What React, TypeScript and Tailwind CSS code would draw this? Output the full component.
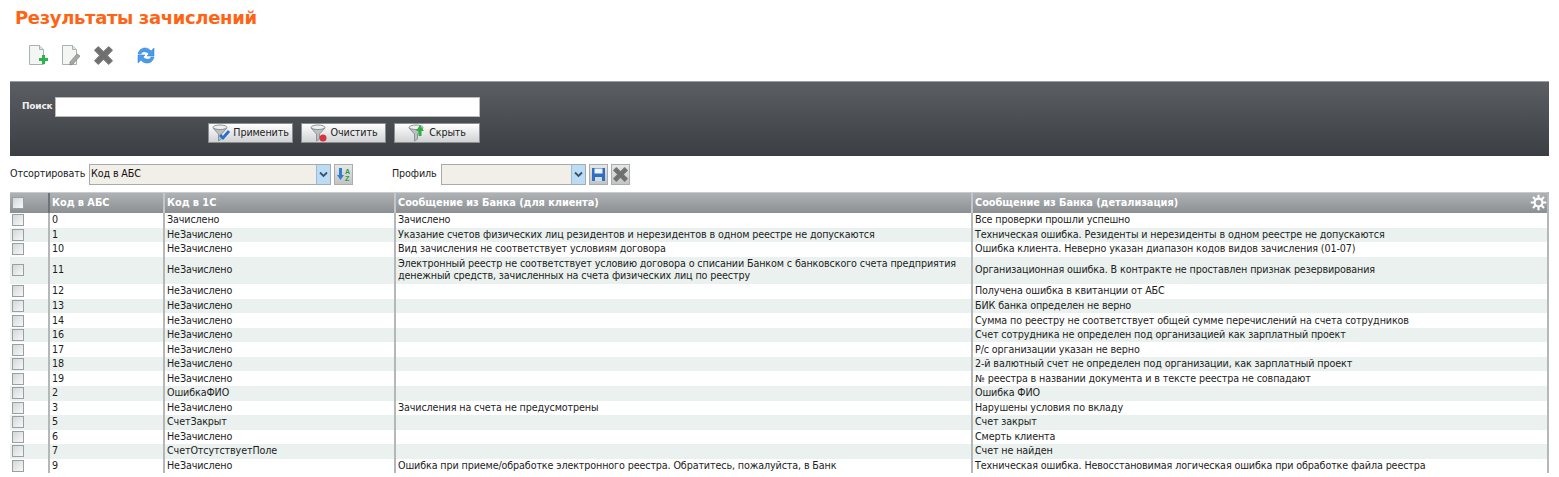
const ROWS = [
  ['0', 'Зачислено', 'Зачислено', 'Все проверки прошли успешно'],
  ['1', 'НеЗачислено', 'Указание счетов физических лиц резидентов и нерезидентов в одном реестре не допускаются', 'Техническая ошибка. Резиденты и нерезиденты в одном реестре не допускаются'],
  ['10', 'НеЗачислено', 'Вид зачисления не соответствует условиям договора', 'Ошибка клиента. Неверно указан диапазон кодов видов зачисления (01-07)'],
  ['11', 'НеЗачислено', 'Электронный реестр не соответствует условию договора о списании Банком с банковского счета предприятия денежный средств, зачисленных на счета физических лиц по реестру', 'Организационная ошибка. В контракте не проставлен признак резервирования'],
  ['12', 'НеЗачислено', '', 'Получена ошибка в квитанции от АБС'],
  ['13', 'НеЗачислено', '', 'БИК банка определен не верно'],
  ['14', 'НеЗачислено', '', 'Сумма по реестру не соответствует общей сумме перечислений на счета сотрудников'],
  ['16', 'НеЗачислено', '', 'Счет сотрудника не определен под организацией как зарплатный проект'],
  ['17', 'НеЗачислено', '', 'Р/с организации указан не верно'],
  ['18', 'НеЗачислено', '', '2-й валютный счет не определен под организации, как зарплатный проект'],
  ['19', 'НеЗачислено', '', '№ реестра в названии документа и в тексте реестра не совпадают'],
  ['2', 'ОшибкаФИО', '', 'Ошибка ФИО'],
  ['3', 'НеЗачислено', 'Зачисления на счета не предусмотрены', 'Нарушены условия по вкладу'],
  ['5', 'СчетЗакрыт', '', 'Счет закрыт'],
  ['6', 'НеЗачислено', '', 'Смерть клиента'],
  ['7', 'СчетОтсутствуетПоле', '', 'Счет не найден'],
  ['9', 'НеЗачислено', 'Ошибка при приеме/обработке электронного реестра. Обратитесь, пожалуйста, в Банк', 'Техническая ошибка. Невосстановимая логическая ошибка при обработке файла реестра'],
];

const GRID = 'grid grid-cols-[38px_115px_231px_577px_578px]';

function Sheet({ children }: { children?: React.ReactNode }) {
  return (
    <svg width="20" height="22" viewBox="0 0 20 22">
      <path d="M1.500 1.500h10l4 4v15h-14z" fill="#f4f6f4" stroke="#a9b3ae" />
      <path d="M11.500 1.500v4h4" fill="#dfe4e1" stroke="#a9b3ae" />
      {children}
    </svg>
  );
}

function BigX({ size = 22 }: { size?: number }) {
  return (
    <svg width={size} height={size} viewBox="0 0 22 22">
      <path d="M1 5l4-4 6 6 6-6 4 4-6 6 6 6-4 4-6-6-6 6-4-4 6-6z" fill="#6f6f6f" stroke="#777" strokeWidth="1.500" strokeLinejoin="round" />
    </svg>
  );
}

function Funnel({ children }: { children?: React.ReactNode }) {
  return (
    <svg width="19" height="18" viewBox="0 0 19 18">
      <ellipse cx="8" cy="3.500" rx="7" ry="2.500" fill="#eef0f1" stroke="#8e9598" />
      <path d="M1 4l5.500 6v7l3-2v-5L15 4c-3 2-11 2-14 0z" fill="#b9bfc2" stroke="#8e9598" />
      {children}
    </svg>
  );
}

function Button({ icon, label, width }: { icon: React.ReactNode; label: string; width: string }) {
  return (
    <button className={`${width} h-[20px] flex items-center justify-center gap-[2px] border border-[#8b8f91] bg-gradient-to-b from-white to-[#d0d2d3] text-[9.6px] tracking-[-0.12px] text-[#222]`}>
      {icon}
      <span>{label}</span>
    </button>
  );
}

function Check() {
  return <span className="block w-[12px] h-[12px] border border-[#9a9fa1] bg-gradient-to-br from-[#d4d8d9] to-[#f7f8f8]" />;
}

function Select({ value, width }: { value: string; width: string }) {
  return (
    <div className={`${width} h-[21px] flex items-center border border-[#a8abab] bg-[#f1efe8] text-[#111]`}>
      <span className="flex-1 pl-[1px]">{value}</span>
      <span className="w-[14px] h-full flex items-center justify-center bg-[#bcdcf6] border-l border-[#9fb9cf]">
        <svg width="9" height="7" viewBox="0 0 9 7"><path d="M1 1.500l3.500 3.500L8 1.500" fill="none" stroke="#37536e" strokeWidth="1.800" /></svg>
      </span>
    </div>
  );
}

function SquareBtn({ children }: { children: React.ReactNode }) {
  return (
    <span className="w-[19px] h-[21px] flex items-center justify-center border border-[#a9adad] bg-gradient-to-b from-[#e6e7e7] to-[#c3c5c5]">
      {children}
    </span>
  );
}

export default function App() {
  return (
    <div className="w-[1559px] h-[477px] overflow-hidden bg-white font-['DejaVu_Sans',sans-serif] text-[9.6px] tracking-[-0.12px] text-[#1c1c1c]">
      <h1 className="pl-[15px] pt-[6px] h-[43px] text-[18px] leading-[24px] tracking-[-0.35px] font-bold text-[#ff6414]">
        Результаты зачислений
      </h1>

      {/* Панель действий */}
      <div className="flex items-center h-[24px] pl-[28px]">
        <span className="w-[33px]">
          <Sheet>
            <path d="M11 14h3v-3h3v3h3v3h-3v3h-3v-3h-3z" fill="#2eb34a" />
          </Sheet>
        </span>
        <span className="w-[33px]">
          <Sheet>
            <path d="M9 18l7-8 3 2-7 8-3 1z" fill="#a5a9a8" stroke="#7a7f7e" strokeWidth="0.700" />
          </Sheet>
        </span>
        <span className="w-[42px]"><BigX size={19} /></span>
        <svg width="20" height="21" viewBox="0 0 20 21">
          <path d="M2 9c1-6 8-8 12-4l1 1 3-3v8h-7l2-2c-3-3-7-3-8 0z" fill="#4a9bea" stroke="#2f7fd2" strokeWidth="0.500" />
          <path d="M18 12c-1 6-8 8-12 4l-1-1-3 3v-8h7l-2 2c3 3 7 3 8 0z" fill="#4a9bea" stroke="#2f7fd2" strokeWidth="0.500" />
        </svg>
      </div>

      {/* Панель поиска */}
      <div className="mx-[10px] mt-[14px] h-[75px] border-t border-[#9a9d9f] bg-gradient-to-b from-[#5b5f63] to-[#3b3f43] pt-[15px] pl-[12px]">
        <div className="flex items-center gap-[3px]">
          <span className="w-[30px] font-bold text-[9px] tracking-[-0.2px] text-[#eee]">Поиск</span>
          <div className="w-[425px] h-[20px] bg-white border border-[#bbb]" />
        </div>
        <div className="flex gap-[8px] mt-[6px] ml-[186px]">
          <Button
            width="w-[85px]"
            label="Применить"
            icon={
              <Funnel>
                <path d="M8 11l3 3 6-7" fill="none" stroke="#2a6fc9" strokeWidth="2.800" />
              </Funnel>
            }
          />
          <Button
            width="w-[85px]"
            label="Очистить"
            icon={
              <Funnel>
                <circle cx="13" cy="14" r="3.500" fill="#d8333a" />
              </Funnel>
            }
          />
          <Button
            width="w-[86px]"
            label="Скрыть"
            icon={
              <Funnel>
                <path d="M8 7l4-6 4 6h-2.500v5h-3V7z" fill="#2fae3f" />
              </Funnel>
            }
          />
        </div>
      </div>

      {/* Сортировка и профиль */}
      <div className="flex items-center h-[22px] mt-[7px] pl-[10px]">
        <span className="w-[79px]">Отсортировать</span>
        <Select value="Код в АБС" width="w-[242px]" />
        <span className="ml-[3px]">
          <SquareBtn>
            <svg width="15" height="15" viewBox="0 0 15 15">
              <path d="M3 1h3v7h2l-3.500 5L1 8h2z" fill="#2f7dd6" />
              <text x="9" y="7" fontSize="7" fontWeight="700" fill="#2a9a3c" fontFamily="Liberation Sans">A</text>
              <text x="9" y="14" fontSize="7" fontWeight="700" fill="#2a9a3c" fontFamily="Liberation Sans">Z</text>
            </svg>
          </SquareBtn>
        </span>
        <span className="ml-[39px] w-[49px]">Профиль</span>
        <Select value="" width="w-[145px]" />
        <span className="ml-[3px]">
          <SquareBtn>
            <svg width="15" height="15" viewBox="0 0 15 15">
              <path d="M1 1h13v13H1z" fill="#2e6fc0" />
              <path d="M3.500 1.500h8v5h-8z" fill="#eef3f8" />
              <path d="M4 10h7v4H4z" fill="#cfdcea" />
            </svg>
          </SquareBtn>
        </span>
        <span className="ml-[3px]">
          <SquareBtn><BigX size={15} /></SquareBtn>
        </span>
      </div>

      {/* Таблица */}
      <div className="mx-[10px] mt-[7px] w-[1539px] border-r-2 border-[#b4b8b9]">
        <div className={`${GRID} h-[21px] border-t border-[#c8cacb] bg-gradient-to-b from-[#aeb2b4] to-[#8c9093] font-bold text-[9.8px] tracking-[-0.05px] text-white items-center relative`}>
          <div className="pl-[2px]"><Check /></div>
          <div className="pl-[2px] h-full flex items-center border-l-2 border-[#6f7375]">Код в АБС</div>
          <div className="pl-[2px] h-full flex items-center border-l-2 border-[#c4c7c8]">Код в 1С</div>
          <div className="pl-[2px] h-full flex items-center border-l-2 border-[#c4c7c8]">Сообщение из Банка (для клиента)</div>
          <div className="pl-[2px] h-full flex items-center border-l-2 border-[#c4c7c8]">Сообщение из Банка (детализация)</div>
          <svg className="absolute right-[0px] top-[1px]" width="17" height="17" viewBox="0 0 24 24" fill="none" stroke="#fff" strokeWidth="3">
            <circle cx="12" cy="12" r="5.500" />
            <path d="M12 1v5M12 18v5M1 12h5M18 12h5M4.200 4.200l3.500 3.500M16.300 16.300l3.500 3.500M4.200 19.800l3.500-3.500M16.300 7.700l3.500-3.500" />
          </svg>
        </div>
        {ROWS.map((row, i) => (
          <div key={row[0]} className={`${GRID} ${row[0] === '11' ? 'h-[27.5px]' : 'h-[14.56px]'} ${i % 2 ? 'bg-[#eaf1ee]' : 'bg-white'} items-center`}>
            <div className="pl-[2px]"><Check /></div>
            {row.map((cell, j) => (
              <div key={j} className="h-full flex items-center border-l-2 border-[#b4b8b9] pl-[2px] leading-[12px]">
                {cell}
              </div>
            ))}
          </div>
        ))}
      </div>
    </div>
  );
}
